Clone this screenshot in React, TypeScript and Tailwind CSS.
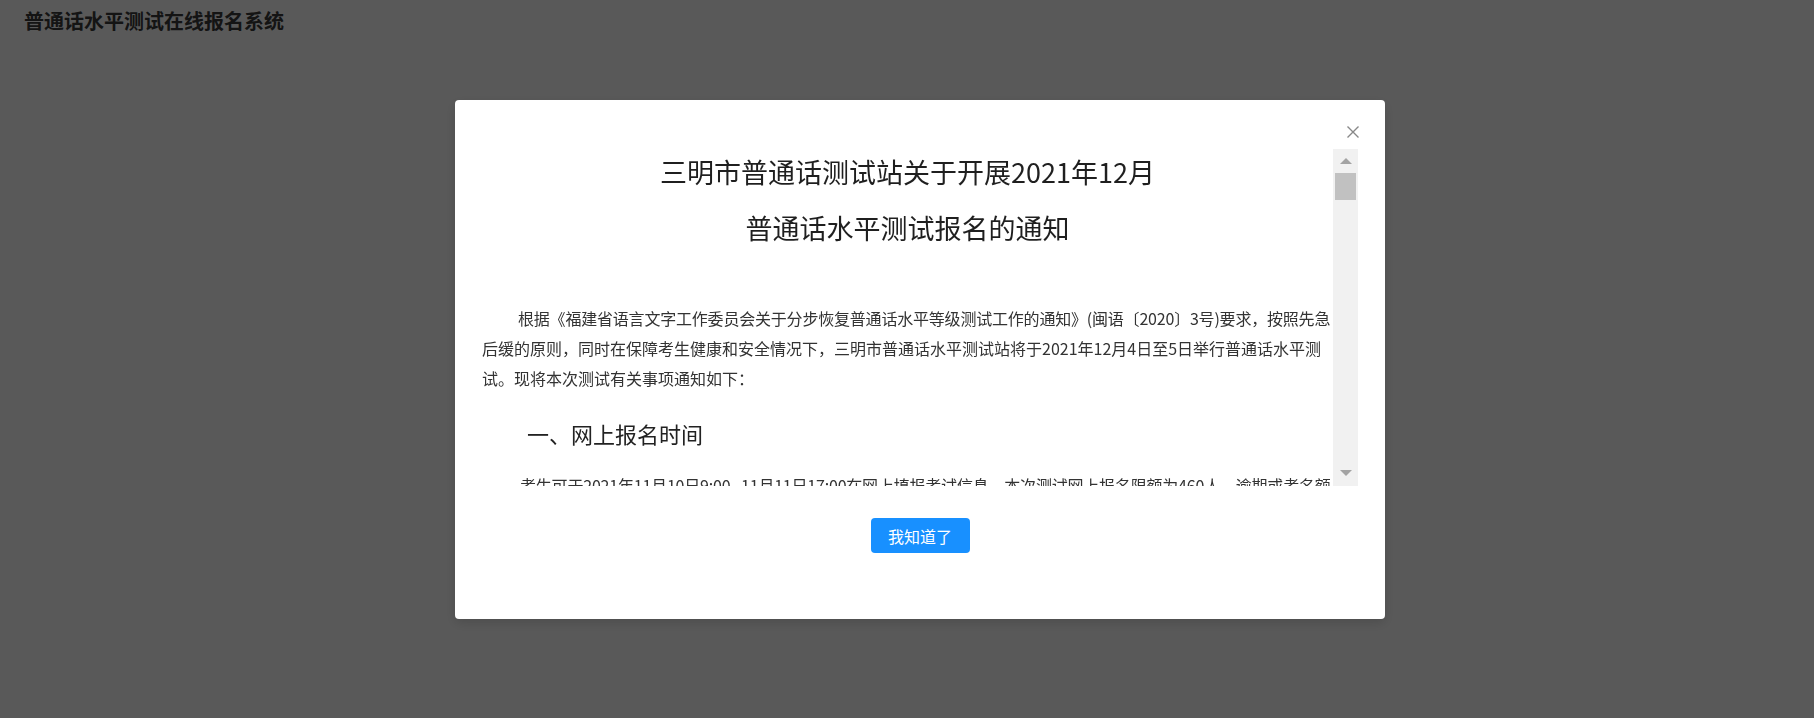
import React from 'react';

// ==================== NOTICE CONTENT ====================
const introLines = [
  '根据《福建省语言文字工作委员会关于分步恢复普通话水平等级测试工作的通知》(闽语〔2020〕3号)要求，按照先急',
  '后缓的原则，同时在保障考生健康和安全情况下，三明市普通话水平测试站将于2021年12月4日至5日举行普通话水平测',
  '试。现将本次测试有关事项通知如下：',
];

const Triangle = ({ down }: { down?: boolean }) => (
  <svg width="12" height="6" viewBox="0 0 12 6">
    <polygon points={down ? '0,0 12,0 6,6' : '0,6 12,6 6,0'} fill="#a3a3a3" />
  </svg>
);

// fake classic scrollbar, drawn so it matches the screenshot
const ScrollBar = () => (
  <div className="w-[25px] bg-[#f1f1f1] flex flex-col">
    <div className="h-[24px] flex items-center justify-center">
      <Triangle />
    </div>
    <div className="mx-[2px] h-[27px] bg-[#c1c1c1]" />
    <div className="flex-1" />
    <div className="h-[27px] flex items-center justify-center">
      <Triangle down />
    </div>
  </div>
);

export default function App() {
  return (
    <div className="min-h-screen bg-white font-['Noto_Sans_CJK_SC',sans-serif]">
      <h1 className="px-6 pt-[7px] text-[20px] leading-[28px] font-bold text-[#3a3a3a]">
        普通话水平测试在线报名系统
      </h1>

      {/* Mask */}
      <div className="fixed inset-0 bg-black/65" />

      {/* Notice modal */}
      <div className="fixed inset-0 flex justify-center items-start pt-[100px] pl-[26px]">
        <div className="relative w-[930px] h-[519px] bg-white rounded-[4px] shadow-[0_4px_12px_rgba(0,0,0,0.15)] px-[27px] pt-[49px]">
          <button className="absolute right-[24px] top-[24px] w-[16px] h-[16px] flex items-center justify-center">
            <svg width="12" height="12" viewBox="0 0 12 12">
              <path d="M0.5 0.5 L11.5 11.5 M11.5 0.5 L0.5 11.5" stroke="#888" strokeWidth="1.4" />
            </svg>
          </button>

          <div className="flex h-[337px]">
            <div className="flex-1 overflow-hidden text-[#333]">
              <div className="text-center text-[#1f1f1f] text-[27px] leading-[46px] whitespace-nowrap">
                三明市普通话测试站关于开展2021年12月
              </div>
              <div className="mt-[10px] text-center text-[#1f1f1f] text-[27px] leading-[46px] whitespace-nowrap">
                普通话水平测试报名的通知
              </div>

              <div className="mt-[52px] text-[16px] leading-[30px]">
                {introLines.map((line, i) => (
                  <div key={i} className={i === 0 ? 'whitespace-nowrap pl-[36px] tracking-[-0.2px]' : 'whitespace-nowrap'}>
                    {line}
                  </div>
                ))}
              </div>

              <div className="mt-[20px] pl-[45px] text-[22px] leading-[40px] text-[#222]">
                一、网上报名时间
              </div>

              <div className="mt-[17px] pl-[38px] text-[16px] leading-[30px] tracking-[-0.2px] whitespace-nowrap">
                考生可于2021年11月10日9:00--11月11日17:00在网上填报考试信息，本次测试网上报名限额为460人，逾期或考名额
              </div>
            </div>
            <ScrollBar />
          </div>

          <div className="mt-[32px] flex justify-center">
            <button className="w-[99px] h-[35px] rounded-[4px] bg-[#1890ff] text-white text-[16px]">
              我知道了
            </button>
          </div>
        </div>
      </div>
    </div>
  );
}
